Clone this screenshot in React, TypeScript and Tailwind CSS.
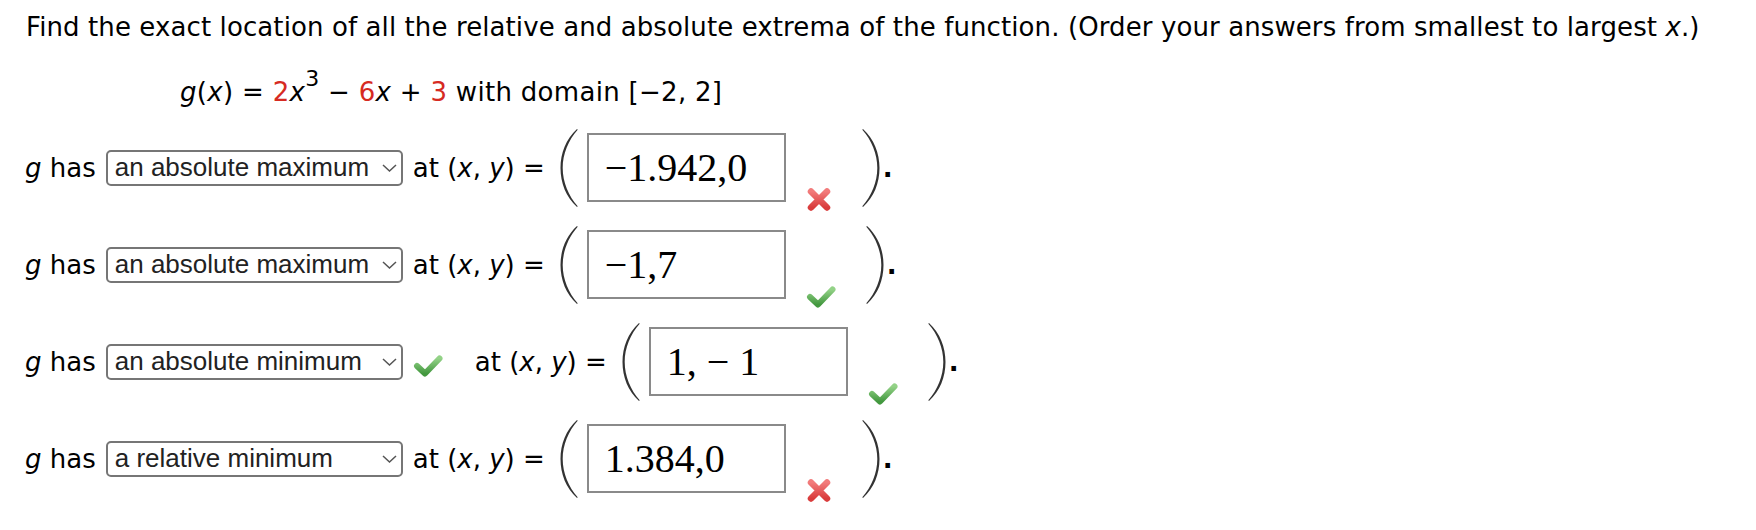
import React from 'react';

type Mark = 'right' | 'wrong';

interface RowProps {
  choice: string;
  choiceMark?: Mark;
  answer: string;
  mark: Mark;
}

const rows: RowProps[] = [
  { choice: 'an absolute maximum', answer: '−1.942,0', mark: 'wrong' },
  { choice: 'an absolute maximum', answer: '−1,7', mark: 'right' },
  { choice: 'an absolute minimum', choiceMark: 'right', answer: '1, − 1', mark: 'right' },
  { choice: 'a relative minimum', answer: '1.384,0', mark: 'wrong' },
];

const Paren: React.FC<{ right?: boolean; className?: string }> = ({ right, className }) => (
  <svg width="18" height="78" viewBox="0 0 18 78" className={`shrink-0 ${className ?? ''}`}>
    {right ? (
      <path d="M1 0 C12 10 17.5 24 17.5 39 C17.5 54 12 68 1 78 L0.3 77.3 C9.5 67 15.3 53 15.3 39 C15.3 25 9.5 11 0.3 0.7 Z" fill="#333" />
    ) : (
      <path d="M17 0 C6 10 0.5 24 0.5 39 C0.5 54 6 68 17 78 L17.7 77.3 C8.5 67 2.7 53 2.7 39 C2.7 25 8.5 11 17.7 0.7 Z" fill="#333" />
    )}
  </svg>
);

const CheckIcon: React.FC<{ className?: string; id: string }> = ({ className, id }) => (
  <svg width="30" height="24" viewBox="0 0 30 24" className={`shrink-0 ${className ?? ''}`}>
    <defs>
      <linearGradient id={id} x1="0" y1="0" x2="0" y2="1">
        <stop offset="0" stopColor="#93d287" />
        <stop offset="1" stopColor="#43983f" />
      </linearGradient>
    </defs>
    <path
      d="M4 12 L12 19.5 L26.5 4.5"
      fill="none"
      stroke={`url(#${id})`}
      strokeWidth="6"
      strokeLinecap="round"
      strokeLinejoin="round"
    />
  </svg>
);

const CrossIcon: React.FC<{ className?: string; id: string }> = ({ className, id }) => (
  <svg width="26" height="25" viewBox="0 0 26 25" className={`shrink-0 ${className ?? ''}`}>
    <defs>
      <linearGradient id={id} x1="0" y1="0" x2="0" y2="1">
        <stop offset="0" stopColor="#f27b7b" />
        <stop offset="1" stopColor="#d93c3c" />
      </linearGradient>
    </defs>
    <path
      d="M5 4.5 L21 20.5 M21 4.5 L5 20.5"
      fill="none"
      stroke={`url(#${id})`}
      strokeWidth="6.5"
      strokeLinecap="round"
    />
  </svg>
);

const FakeSelect: React.FC<{ value: string }> = ({ value }) => (
  <div className="ml-[10px] flex h-[36px] w-[297px] shrink-0 items-center justify-between rounded-[5px] border-2 border-[#767676] pl-[7px] pr-[4px] font-['Liberation_Sans',Arial,sans-serif] text-[26px] leading-[29px] text-[#222]">
    <span>{value}</span>
    <svg width="15" height="8" viewBox="0 0 15 8">
      <path d="M1 1 L7.5 7 L14 1" fill="none" stroke="#555" strokeWidth="1.5" />
    </svg>
  </div>
);

const ExtremumRow: React.FC<RowProps & { idx: number }> = ({ choice, choiceMark, answer, mark, idx }) => (
  <div className="flex h-[97px] items-center whitespace-pre">
    <span>
      <i>g</i> has
    </span>
    <FakeSelect value={choice} />
    {choiceMark && <CheckIcon id={`c-sel-${idx}`} className="ml-[10px] mt-[8px]" />}
    <span className={choiceMark ? 'ml-[32px]' : 'ml-[10px]'}>
      at (<i>x</i>, <i>y</i>) =
    </span>
    <Paren className="ml-[15px]" />
    <div className="ml-[9px] flex h-[69px] w-[199px] shrink-0 items-center border-2 border-[#8a8a8a] pl-[16px] font-['Liberation_Serif','Times_New_Roman',serif] text-[40px] leading-[44px]">
      {answer}
    </div>
    {mark === 'right' ? (
      <CheckIcon id={`c-ans-${idx}`} className="ml-[20px] mt-[65px]" />
    ) : (
      <CrossIcon id={`x-ans-${idx}`} className="ml-[20px] mt-[64px]" />
    )}
    <Paren right className="ml-[30px]" />
    <span className="ml-[3px] font-bold">.</span>
  </div>
);

export default function App() {
  return (
    <div className="min-h-[530px] w-[1756px] bg-white font-['DejaVu_Sans',Verdana,sans-serif] text-[26px] leading-[30px] text-black">
      <p className="pl-[26px] pt-[12px] tracking-[0.1px]">
        Find the exact location of all the relative and absolute extrema of the function. (Order your answers from
        smallest to largest <i>x</i>.)
      </p>
      <p className="mt-[35px] whitespace-pre pl-[180px] tracking-[0.3px]">
        <i>g</i>(<i>x</i>) = <span className="text-[#d62a22]">2</span>
        <i>x</i>
        <span className="relative -top-[15px] text-[22px] leading-none">3</span> − <span className="text-[#d62a22]">6</span>
        <i>x</i> + <span className="text-[#d62a22]">3</span> with domain [−2, 2]
      </p>
      <div className="mt-[12px] pl-[25px]">
        {rows.map((r, i) => (
          <ExtremumRow key={i} idx={i} {...r} />
        ))}
      </div>
    </div>
  );
}
